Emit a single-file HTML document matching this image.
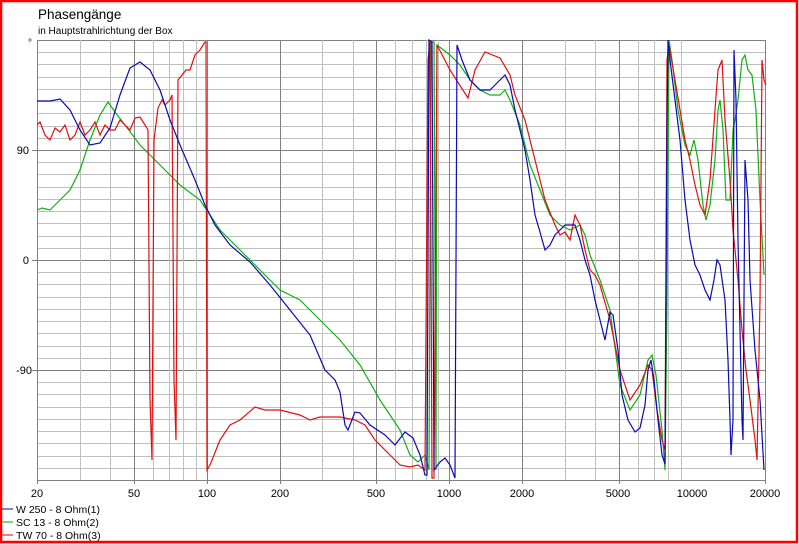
<!DOCTYPE html>
<html><head><meta charset="utf-8"><style>
html,body{margin:0;padding:0;background:#fff}
body{width:799px;height:544px;position:relative;overflow:hidden;font-family:"Liberation Sans",sans-serif}
svg{position:absolute;left:0;top:0}
</style></head><body>
<svg id="s" width="799" height="544" viewBox="0 0 799 544" xmlns="http://www.w3.org/2000/svg" font-family="Liberation Sans, sans-serif">
<rect x="1" y="1" width="796" height="541" fill="#fff" stroke="#f00" stroke-width="2.5"/>
<text x="38" y="19" font-size="13.5">Phasengänge</text>
<text x="38" y="34" font-size="10">in Hauptstrahlrichtung der Box</text>
<text x="28" y="46" font-size="10">°</text>
<g id="grid"></g>
<g font-size="11" text-anchor="end">
<text x="29" y="154">90</text>
<text x="29" y="264">0</text>
<text x="32" y="374">-90</text>
</g>
<g font-size="11" text-anchor="middle">
<text x="37" y="497">20</text><text x="134" y="497">50</text><text x="207" y="497">100</text>
<text x="280" y="497">200</text><text x="376" y="497">500</text><text x="449" y="497">1000</text>
<text x="522" y="497">2000</text><text x="618" y="497">5000</text><text x="692" y="497">10000</text><text x="765" y="497">20000</text>
</g>
<g font-size="10.5">
<line x1="2" y1="509" x2="13" y2="509" stroke="#00a"/><text x="16" y="513">W 250 - 8 Ohm(1)</text>
<line x1="2" y1="522" x2="13" y2="522" stroke="#0a0"/><text x="16" y="526">SC 13 - 8 Ohm(2)</text>
<line x1="2" y1="535" x2="13" y2="535" stroke="#d00"/><text x="16" y="539">TW 70 - 8 Ohm(3)</text>
</g>
<g fill="none" stroke-width="1.2">
<polyline stroke="#10b010" points="37,210 42,208 50,210 60,200 70,190 80,170 90,140 100,115 108,102 115,112 125,125 140,145 160,165 180,185 200,200 210,215 220,230 230,240 240,250 260,270 280,290 300,300 320,320 340,340 360,365 380,400 400,430 410,455 418,462 425,455 429,470 431,42 434,42 436,470 437,45 450,55 460,65 470,80 480,90 490,95 500,95 505,90 510,100 520,125 530,165 540,190 550,215 560,225 570,230 580,225 585,235 590,255 600,280 610,310 620,385 630,410 640,395 648,360 652,355 656,375 662,430 665,470 667,300 669,40 672,60 678,110 685,145 690,155 694,140 698,160 703,205 706,220 710,205 715,160 718,110 720,100 723,130 726,200 730,200 733,130 735,120 738,100 742,60 745,55 748,70 752,75 756,110 760,200 764,275"/>
<polyline stroke="#e01010" points="37,125 40,122 45,135 50,140 55,128 60,132 65,125 70,140 75,135 80,122 85,135 90,130 95,122 100,135 105,125 110,130 115,130 120,120 125,125 130,130 135,118 140,117 145,125 148,130 150,400 152,460 154,140 158,108 162,100 165,105 170,100 172,95 174,380 176,440 178,80 182,75 186,70 190,70 195,55 200,50 205,42 206,42 207,470 210,465 220,440 230,425 240,420 255,407 265,410 280,410 300,415 310,420 320,417 340,417 355,420 365,425 375,440 390,455 400,465 410,467 418,465 425,470 428,60 430,42 432,478 434,478 437,45 450,70 468,98 475,70 485,52 500,58 510,75 515,95 525,120 535,160 545,200 555,225 560,235 565,232 570,240 575,215 580,225 585,250 590,270 595,275 600,285 610,320 620,370 630,400 640,385 648,365 652,370 657,410 662,440 665,450 667,60 669,45 675,80 680,110 685,140 690,160 695,185 700,205 705,215 710,180 715,110 718,70 722,60 725,120 730,180 733,230 738,280 742,330 746,370 750,400 755,440 757,460 760,300 762,60 764,80 766,85"/>
<polyline stroke="#0a0ab8" points="37,101 50,101 60,99 70,110 80,130 90,145 100,143 110,128 120,95 130,68 140,62 150,70 160,90 170,120 180,145 195,180 205,205 215,225 230,245 250,262 270,285 290,310 310,335 325,370 335,380 340,392 345,425 348,430 355,412 360,413 370,425 385,435 395,445 405,432 413,438 420,455 425,475 427,475 429,40 432,42 434,470 440,462 445,458 450,465 455,478 457,45 462,60 470,80 480,90 490,90 500,80 505,75 510,85 515,110 520,130 525,150 530,180 535,215 540,232 545,250 550,245 555,235 560,230 565,225 570,225 575,225 580,240 585,260 590,275 595,300 600,320 605,340 610,312 613,315 618,350 622,395 628,420 635,432 640,428 645,405 648,370 651,360 654,380 658,420 662,455 665,464 667,130 668,40 670,60 675,100 680,140 685,200 690,240 695,265 700,275 705,290 710,300 714,280 717,260 720,265 725,300 728,360 730,420 731,455 733,420 734,50 736,100 738,240 740,330 742,420 743,440 745,160 748,200 750,280 755,350 760,400 764,470"/>
</g>
</svg>
<script>
var g=document.getElementById('grid'),ns='http://www.w3.org/2000/svg',h='';
function L(x1,y1,x2,y2,c){h+='<line x1="'+x1+'" y1="'+y1+'" x2="'+x2+'" y2="'+y2+'" stroke="'+c+'" stroke-width="1"/>';}
for(var d=-180;d<=180;d+=10){var y=Math.round(260-d*110/90)+0.5;var maj=(d%90==0);L(37,y,765,y,maj?'#808080':'#c0c0c0');}
[33].forEach(function(){[150,260,370].forEach(function(y){L(32,y+0.5,37,y+0.5,'#808080');});});
var dec=[20,200,2000];
for(var k=0;k<3;k++){for(var m=1;m<=9;m++){var base=[10,100,1000][k]*m;if(base<20)continue;var x=Math.round(37+242.67*Math.log10(base/20))+0.5;var maj=(m==1||m==2||m==5);L(x,40,x,maj?484:480,maj?'#808080':'#c0c0c0');}}
L(765.5,40,765.5,484,'#808080');
g.innerHTML=h;
</script>
</body></html>
